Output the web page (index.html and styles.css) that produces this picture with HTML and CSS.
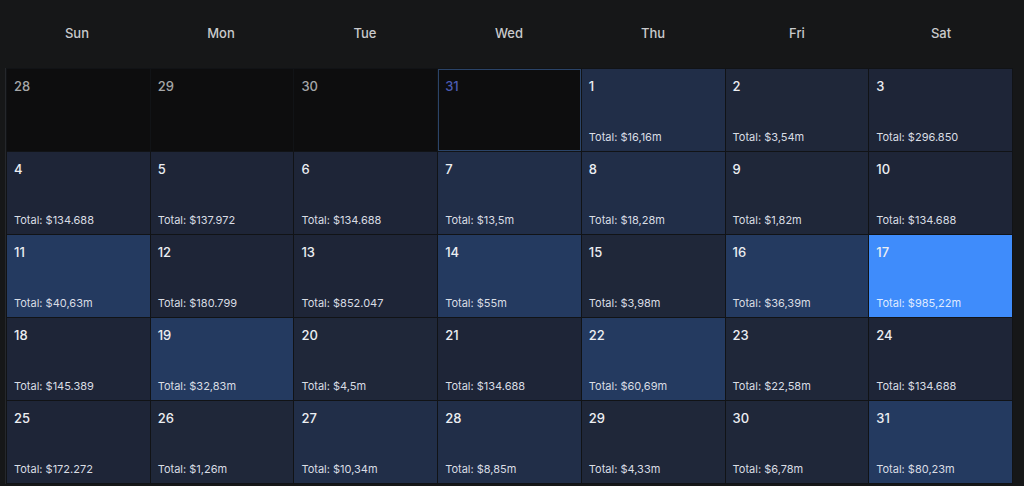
FILE: index.html
```html
<!DOCTYPE html>
<html lang="en">
<head>
<meta charset="utf-8">
<link rel="stylesheet" href="styles.css">
</head>
<body>
<div class="calendar">
  <div class="weekdays">
    <div class="wd">Sun</div><div class="wd">Mon</div><div class="wd">Tue</div><div class="wd">Wed</div><div class="wd">Thu</div><div class="wd">Fri</div><div class="wd">Sat</div>
  </div>
  <div class="grid">
    <div class="cell prev"><span class="num">28</span></div>
    <div class="cell prev"><span class="num">29</span></div>
    <div class="cell prev"><span class="num">30</span></div>
    <div class="cell prev today"><span class="num">31</span></div>
    <div class="cell l2"><span class="num">1</span><span class="total">Total: $16,16m</span></div>
    <div class="cell l1"><span class="num">2</span><span class="total">Total: $3,54m</span></div>
    <div class="cell l0"><span class="num">3</span><span class="total">Total: $296.850</span></div>

    <div class="cell l0"><span class="num">4</span><span class="total">Total: $134.688</span></div>
    <div class="cell l0"><span class="num">5</span><span class="total">Total: $137.972</span></div>
    <div class="cell l0"><span class="num">6</span><span class="total">Total: $134.688</span></div>
    <div class="cell l2"><span class="num">7</span><span class="total">Total: $13,5m</span></div>
    <div class="cell l2"><span class="num">8</span><span class="total">Total: $18,28m</span></div>
    <div class="cell l1"><span class="num">9</span><span class="total">Total: $1,82m</span></div>
    <div class="cell l0"><span class="num">10</span><span class="total">Total: $134.688</span></div>

    <div class="cell l3"><span class="num">11</span><span class="total">Total: $40,63m</span></div>
    <div class="cell l0"><span class="num">12</span><span class="total">Total: $180.799</span></div>
    <div class="cell l0"><span class="num">13</span><span class="total">Total: $852.047</span></div>
    <div class="cell l3"><span class="num">14</span><span class="total">Total: $55m</span></div>
    <div class="cell l1"><span class="num">15</span><span class="total">Total: $3,98m</span></div>
    <div class="cell l3"><span class="num">16</span><span class="total">Total: $36,39m</span></div>
    <div class="cell top"><span class="num">17</span><span class="total">Total: $985,22m</span></div>

    <div class="cell l0"><span class="num">18</span><span class="total">Total: $145.389</span></div>
    <div class="cell l3"><span class="num">19</span><span class="total">Total: $32,83m</span></div>
    <div class="cell l1"><span class="num">20</span><span class="total">Total: $4,5m</span></div>
    <div class="cell l0"><span class="num">21</span><span class="total">Total: $134.688</span></div>
    <div class="cell l3"><span class="num">22</span><span class="total">Total: $60,69m</span></div>
    <div class="cell l1"><span class="num">23</span><span class="total">Total: $22,58m</span></div>
    <div class="cell l0"><span class="num">24</span><span class="total">Total: $134.688</span></div>

    <div class="cell l0"><span class="num">25</span><span class="total">Total: $172.272</span></div>
    <div class="cell l1"><span class="num">26</span><span class="total">Total: $1,26m</span></div>
    <div class="cell l2"><span class="num">27</span><span class="total">Total: $10,34m</span></div>
    <div class="cell l2"><span class="num">28</span><span class="total">Total: $8,85m</span></div>
    <div class="cell l1"><span class="num">29</span><span class="total">Total: $4,33m</span></div>
    <div class="cell l1"><span class="num">30</span><span class="total">Total: $6,78m</span></div>
    <div class="cell l3"><span class="num">31</span><span class="total">Total: $80,23m</span></div>
  </div>
</div>
</body>
</html>
```

FILE: styles.css
```css
* { box-sizing: border-box; }
html, body {
  margin: 0;
  padding: 0;
  background: #161718;
  height: 486px;
  overflow: hidden;
}
body {
  font-family: Inter, "Noto Sans", sans-serif;
  color: #e4e7ec;
}
.calendar {
  width: 1008px;
  margin-left: 5px;
}
.weekdays {
  display: grid;
  grid-template-columns: repeat(7, 1fr);
  height: 68px;
  align-items: center;
}
.wd {
  text-align: center;
  font-size: 13px;
  font-weight: 500;
  color: #c9cacc;
  padding-bottom: 3px;
}
.grid {
  display: grid;
  grid-template-columns: repeat(7, 1fr);
  grid-auto-rows: 82px;
  gap: 1px;
  padding: 1px;
  background: #111316;
  border-left: 1px solid #25272b;
}
.cell {
  display: flex;
  flex-direction: column;
  justify-content: space-between;
  padding: 9px 8px 7px 7px;
  background: #1e2537;
}
.num {
  font-size: 13px;
  font-weight: 500;
  line-height: 16px;
  color: #eceef2;
}
.total {
  font-size: 11px;
  line-height: 14px;
  color: #d9dde4;
}
.prev { background: #0d0d0e; }
.prev .num { color: #a5a6a8; }
.today {
  border: 1px solid #2b4468;
  padding: 8px 7px 6px 6px;
}
.today .num { color: #4c5cb4; }
.l0 { background: #1e2537; }
.l1 { background: #1f2739; }
.l2 { background: #212e48; }
.l3 { background: #243a60; }
.top { background: #3f8cfb; }
.top .total { color: #dfeaff; }
```
